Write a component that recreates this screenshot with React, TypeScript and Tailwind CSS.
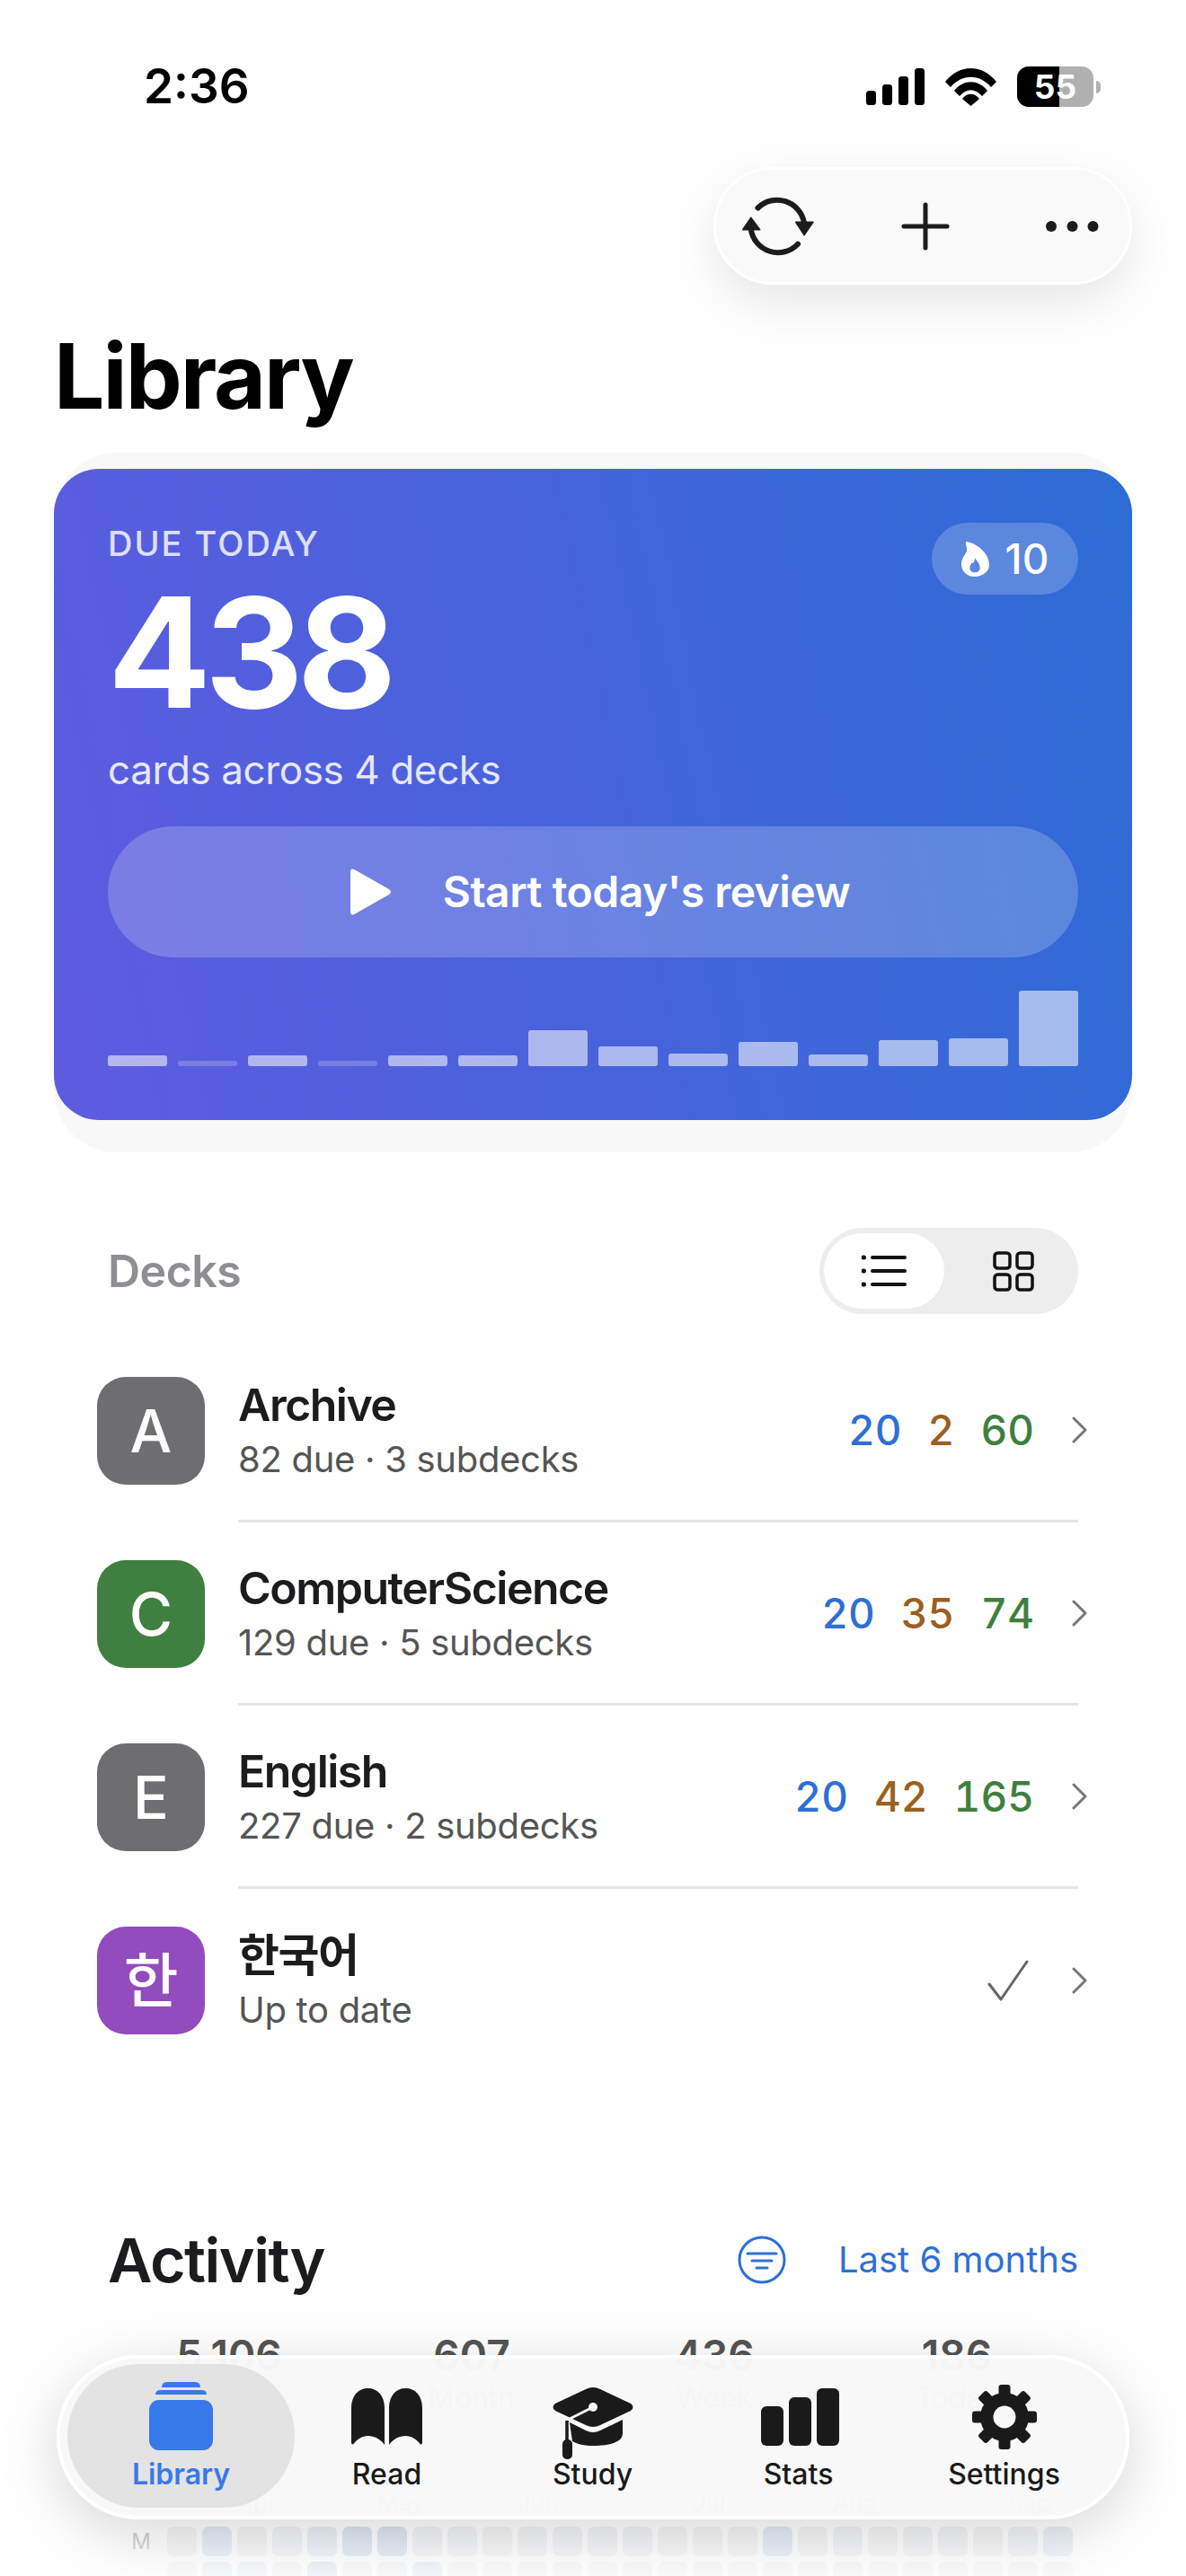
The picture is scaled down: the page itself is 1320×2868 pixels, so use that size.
const bars = [12, 6, 12, 6, 12, 12, 40, 22, 14, 27, 13, 29, 31, 84];

const decks = [
  { letter: "A", color: "bg-[#6e6e70]", name: "Archive", sub: "82 due · 3 subdecks", counts: ["20", "2", "60"] },
  { letter: "C", color: "bg-[#3f7f40]", name: "ComputerScience", sub: "129 due · 5 subdecks", counts: ["20", "35", "74"] },
  { letter: "E", color: "bg-[#6e6e70]", name: "English", sub: "227 due · 2 subdecks", counts: ["20", "42", "165"] },
  { letter: "한", color: "bg-[#924cbd]", name: "한국어", sub: "Up to date", counts: [] as string[] },
];

const stats = [
  { value: "5,106", label: "Year" },
  { value: "607", label: "Month" },
  { value: "436", label: "Week" },
  { value: "186", label: "Today" },
];

const months = [
  { name: "Apr", cls: "col-start-3" },
  { name: "May", cls: "col-start-7" },
  { name: "Jun", cls: "col-start-11" },
  { name: "Jul", cls: "col-start-16" },
  { name: "Aug", cls: "col-start-20" },
  { name: "Sep", cls: "col-start-25" },
];

const levels = ["bg-[#f3f3f3]", "bg-[#f0f1f4]", "bg-[#e8edf3]", "bg-[#dfe8f4]", "bg-[#d8e2ef]"];
const heatRows = [
  [0, 3, 0, 1, 2, 4, 4, 1, 1, 0, 1, 1, 1, 1, 0, 0, 0, 3, 0, 1, 0, 1, 1, 0, 1, 2],
  [0, 2, 2, 1, 4, 1, 1, 3, 1, 0, 1, 1, 0, 1, 0, 1, 0, 1, 1, 1, 0, 1, 1, 0, 1, 1],
];

function SignalIcon() {
  return (
    <svg width="65" height="41" viewBox="0 0 65 41" fill="#000">
      <rect x="0" y="25" width="11" height="16" rx="3.5" />
      <rect x="18" y="18" width="11" height="23" rx="3.5" />
      <rect x="36" y="9" width="11" height="32" rx="3.5" />
      <rect x="54" y="0" width="11" height="41" rx="3.5" />
    </svg>
  );
}

function WifiIcon() {
  return (
    <svg width="57" height="42" viewBox="0 0 57 42" fill="#000">
      <path d="M0 15 C16 -5 41 -5 57 15 L51 21 C38 6 19 6 6 21 Z" />
      <path d="M10 25 C20 12 37 12 47 25 L41 31 C33 22 24 22 16 31 Z" />
      <path d="M19 34 C24 27 33 27 38 34 L28.5 42 Z" />
    </svg>
  );
}

function Battery() {
  return (
    <div className="flex items-center">
      <div className="relative flex h-[45px] w-[85px] overflow-hidden rounded-[13px] bg-[#b0b0b0]">
        <div className="h-full w-[47px] bg-black" />
        <span className="absolute inset-0 flex items-center justify-center text-[37px] font-bold leading-none text-white">
          55
        </span>
      </div>
      <div className="ml-[3px] h-[14px] w-[5px] rounded-r-full bg-[#b0b0b0]" />
    </div>
  );
}

function SyncIcon() {
  return (
    <svg width="80" height="80" viewBox="0 0 80 80" fill="none" stroke="#1c1c1e" strokeWidth="6" strokeLinecap="round">
      <path d="M17.5 19.5 A30.5 30.5 0 0 1 69 36" />
      <path d="M59.7 35.3 H79 L69 49.7 Z" fill="#1c1c1e" strokeWidth="1.5" strokeLinejoin="round" />
      <path d="M62 59.7 A30.5 30.5 0 0 1 9.7 43" />
      <path d="M0.7 43.7 H19.7 L9.7 30.3 Z" fill="#1c1c1e" strokeWidth="1.5" strokeLinejoin="round" />
    </svg>
  );
}

function Flame() {
  return (
    <svg width="31" height="39" viewBox="0 0 93 117" fill="#fff">
      <path
        fillRule="evenodd"
        d="M15 0 C40 2 90 30 93 75 C95 100 70 117 45 117 C18 117 0 100 0 75 C0 55 12 45 18 32 C20 22 14 10 15 0 Z M46 55 C50 65 62 72 62 88 C62 98 55 103 45 103 C35 103 28 98 28 88 C28 80 32 78 35 70 C38 75 43 70 46 55 Z"
      />
    </svg>
  );
}

function ListIcon() {
  return (
    <svg width="50" height="36" viewBox="0 0 50 36" fill="none" stroke="#111" strokeWidth="4" strokeLinecap="round">
      <path d="M12 3 H48 M12 18 H48 M12 33 H48" />
      <path d="M2 3 H2.5 M2 18 H2.5 M2 33 H2.5" strokeWidth="5" />
    </svg>
  );
}

function GridIcon() {
  return (
    <svg width="46" height="45" viewBox="0 0 46 45" fill="none" stroke="#111" strokeWidth="3.5">
      <rect x="2" y="2" width="17" height="17" rx="3.5" />
      <rect x="27" y="2" width="17" height="17" rx="3.5" />
      <rect x="2" y="26" width="17" height="17" rx="3.5" />
      <rect x="27" y="26" width="17" height="17" rx="3.5" />
    </svg>
  );
}

function Chevron() {
  return (
    <svg width="18" height="30" viewBox="0 0 18 30" fill="none" stroke="#777" strokeWidth="3" strokeLinecap="round" strokeLinejoin="round">
      <path d="M3 2 L16 15 L3 28" />
    </svg>
  );
}

function FilterIcon() {
  return (
    <svg width="54" height="54" viewBox="0 0 54 54" fill="none" stroke="#2f6fd6" strokeWidth="3" strokeLinecap="round">
      <circle cx="27" cy="27" r="25" />
      <path d="M11 20 H43 M16 28 H38 M21 36 H33" />
    </svg>
  );
}

function LibraryIcon() {
  return (
    <svg className="mt-[2px]" width="71" height="76" viewBox="0 0 71 76" fill="#3779ea">
      <path d="M14 6 Q14 0 20 0 H51 Q57 0 57 6 H14 Z" />
      <path d="M7 14 Q7 9 13 9 H58 Q64 9 64 14 H7 Z" />
      <rect x="0" y="20" width="71" height="56" rx="11" />
    </svg>
  );
}

function ReadIcon() {
  return (
    <svg className="mt-[9px]" width="79" height="63" viewBox="0 0 79 63" fill="#1a1a1a">
      <path d="M0 22 C0 8 8 0 18.5 0 C29 0 37 8 37 22 V63 C33 57 26 53 18.5 53 C12 53 6 57 2.5 62 C1 63 0 62 0 60 Z" />
      <path d="M79 22 C79 8 71 0 60.5 0 C50 0 42 8 42 22 V63 C46 57 53 53 60.5 53 C67 53 73 57 76.5 62 C78 63 79 62 79 60 Z" />
    </svg>
  );
}

function StudyIcon() {
  return (
    <svg className="mt-[7px]" width="92" height="81" viewBox="0 0 92 81" fill="#1a1a1a">
      <path d="M38 3 Q46 -1 54 3 L88 19 Q93 23 88 27 L54 43 Q46 47 38 43 L4 27 Q-1 23 4 19 Z" />
      <path d="M20 40 L38 49 Q46 53 54 49 L79 37 V52 C79 62 65 66 46 66 C37 66 28 64 23 61 Z" />
      <path d="M46 23 L16 38" stroke="#f8f8f8" strokeWidth="3" fill="none" />
      <circle cx="46" cy="23" r="5" fill="#f8f8f8" />
      <path d="M17 38 V62" stroke="#1a1a1a" strokeWidth="3.5" fill="none" />
      <rect x="12" y="59" width="11" height="22" rx="5" />
    </svg>
  );
}

function StatsIcon() {
  return (
    <svg className="mt-[9px] ml-[4px]" width="87" height="64" viewBox="0 0 87 64" fill="#1a1a1a">
      <rect x="0" y="20" width="25" height="44" rx="6" />
      <rect x="31" y="10" width="25" height="54" rx="6" />
      <rect x="62" y="0" width="25" height="64" rx="6" />
    </svg>
  );
}

function GearIcon() {
  const angles = [0, 45, 90, 135, 180, 225, 270, 315];
  return (
    <svg className="mt-[5px]" width="72" height="72" viewBox="-36 -36 72 72" fill="#1a1a1a">
      <circle r="27" />
      {angles.map((a) => (
        <rect key={a} x="-6.5" y="-36" width="13" height="16" rx="3" transform={`rotate(${a})`} />
      ))}
      <circle r="12.5" fill="#f8f8f8" />
    </svg>
  );
}

const tabs = [
  { label: "Read", icon: <ReadIcon /> },
  { label: "Study", icon: <StudyIcon /> },
  { label: "Stats", icon: <StatsIcon /> },
  { label: "Settings", icon: <GearIcon /> },
];

export default function App() {
  return (
    <div className="relative h-[2868px] w-[1320px] overflow-hidden bg-white font-['Inter','Noto_Sans_CJK_KR',sans-serif]">
      {/* status bar */}
      <div className="flex h-[186px] items-start justify-between pl-[160px] pr-[95px] pt-[74px]">
        <span className="text-[53px] font-semibold leading-[45px] text-black">2:36</span>
        <div className="flex items-center gap-[23px]">
          <SignalIcon />
          <WifiIcon />
          <Battery />
        </div>
      </div>

      {/* toolbar */}
      <div className="ml-auto mr-[60px] flex h-[131px] w-[466px] items-center rounded-full border-[3px] border-white bg-[#f9f9f9] shadow-[0_20px_60px_rgba(0,0,0,0.1)]">
        <div className="ml-[29px]">
          <SyncIcon />
        </div>
        <svg className="ml-[97px]" width="54" height="54" viewBox="0 0 54 54" stroke="#1c1c1e" strokeWidth="5" strokeLinecap="round">
          <path d="M27 3 V51 M3 27 H51" />
        </svg>
        <svg className="ml-[106px]" width="60" height="14" viewBox="0 0 60 14" fill="#1c1c1e">
          <circle cx="7" cy="7" r="6" />
          <circle cx="30.5" cy="7" r="6" />
          <circle cx="53.5" cy="7" r="6" />
        </svg>
      </div>

      <h1 className="ml-[60px] mt-[42px] text-[100px] font-bold leading-[120px] tracking-[-2px] text-black">Library</h1>

      {/* due today card */}
      <div className="mx-[60px] mt-[25px] rounded-[70px] bg-[#f8f8f8] pb-[36px] pt-[18px]">
        <div className="relative h-[725px] rounded-[50px] bg-[linear-gradient(78deg,#5f5be0,#2d6cd6)] px-[60px] pt-[61px]">
          <div className="absolute right-[60px] top-[60px] flex h-[80px] w-[163px] items-center justify-center gap-[18px] rounded-full bg-white/20">
            <Flame />
            <span className="text-[46px] font-medium leading-none text-white">10</span>
          </div>
          <div className="text-[38px] font-medium leading-[44px] tracking-[2px] text-white/80">DUE TODAY</div>
          <div className="mt-[24px] text-[170px] font-bold leading-[150px] tracking-[-7px] text-white">438</div>
          <div className="mt-[28px] text-[44px] leading-[56px] tracking-[-0.4px] text-white/85">cards across 4 decks</div>
          <div className="mt-[35px] flex h-[146px] items-center justify-center gap-[57px] rounded-full bg-white/20 pl-[16px]">
            <svg width="46" height="52" viewBox="0 0 46 52" fill="#fff">
              <path d="M0 4 Q0 -2 6 2 L43 23 Q47 26 43 29 L6 50 Q0 54 0 48 Z" />
            </svg>
            <span className="text-[48px] font-semibold leading-none tracking-[-0.5px] text-white">Start today's review</span>
          </div>
          <div className="mt-[37px] flex h-[84px] items-end gap-[12px]">
            {bars.map((h, i) => (
              <div
                key={i}
                className={h < 8 ? "w-[66px] rounded-[3px] bg-white/20" : "w-[66px] rounded-[3px] bg-white/55"}
                style={{ height: h }}
              />
            ))}
          </div>
        </div>
      </div>

      {/* decks */}
      <div className="mt-[84px] flex h-[96px] items-center justify-between pl-[120px] pr-[120px]">
        <span className="text-[50px] font-semibold tracking-[-0.5px] text-[#8e8e93]">Decks</span>
        <div className="flex h-[96px] w-[288px] items-center rounded-full bg-[#ededed] pl-[5px]">
          <div className="flex h-[84px] w-[134px] items-center justify-center rounded-full bg-white">
            <ListIcon />
          </div>
          <div className="ml-[54px]">
            <GridIcon />
          </div>
        </div>
      </div>

      <div className="ml-[108px] mr-[120px] mt-[28px]">
        {decks.map((d, i) => (
          <div key={d.name} className="flex h-[204px] items-center">
            <div className={`flex h-[120px] w-[120px] shrink-0 items-center justify-center rounded-[32px] text-[66px] font-medium text-white ${d.color}`}>
              {d.letter}
            </div>
            <div className={i < decks.length - 1 ? "ml-[37px] flex h-full flex-1 items-center border-b-[3px] border-[#e5e5e5]" : "ml-[37px] flex h-full flex-1 items-center"}>
              <div className="flex flex-col gap-[6px]">
                <span className="text-[50px] font-semibold leading-[60px] tracking-[-1.5px] text-[#1c1c1e]">{d.name}</span>
                <span className="text-[40px] leading-[50px] tracking-[-0.3px] text-[#555]">{d.sub}</span>
              </div>
              <div className="-mr-[10px] ml-auto flex items-center">
                {d.counts.length > 0 ? (
                  <div className="flex gap-[29px] text-[46px] font-medium leading-none tabular-nums">
                    <span className="text-[#2f6fd6]">{d.counts[0]}</span>
                    <span className="text-[#9a6020]">{d.counts[1]}</span>
                    <span className="text-[#3f7f40]">{d.counts[2]}</span>
                  </div>
                ) : (
                  <svg className="mr-[6px]" width="46" height="46" viewBox="0 0 46 46" fill="none" stroke="#666" strokeWidth="3" strokeLinecap="round" strokeLinejoin="round">
                    <path d="M2 27 L15 44 L44 2" />
                  </svg>
                )}
                <div className="ml-[41px]">
                  <Chevron />
                </div>
              </div>
            </div>
          </div>
        ))}
      </div>

      {/* activity */}
      <div className="mt-[166px] flex h-[86px] items-center px-[120px]">
        <span className="text-[68px] font-semibold tracking-[-1.5px] text-[#1c1c1e]">Activity</span>
        <div className="ml-auto flex items-center gap-[58px]">
          <FilterIcon />
          <span className="text-[40px] leading-none text-[#2f6fd6]">Last 6 months</span>
        </div>
      </div>

      <div className="mt-[35px] grid grid-cols-4 px-[120px]">
        {stats.map((s) => (
          <div key={s.label} className="flex flex-col items-center">
            <span className="text-[46px] font-semibold leading-[56px] text-[#555]">{s.value}</span>
            <span className="text-[32px] leading-[40px] text-[#888]">{s.label}</span>
          </div>
        ))}
      </div>

      <div className="ml-[186px] mt-[82px] grid h-[30px] grid-cols-[repeat(26,33px)] gap-x-[6px] text-[26px] leading-[30px] text-[#888]">
        {months.map((m) => (
          <span key={m.name} className={m.cls}>
            {m.name}
          </span>
        ))}
      </div>

      <div className="ml-[120px] mt-[11px] flex flex-col gap-[6px]">
        {heatRows.map((row, r) => (
          <div key={r} className="flex items-center">
            <span className="w-[48px] text-right text-[24px] leading-none text-[#c4c4c4]">{r === 0 ? "M" : ""}</span>
            <div className="ml-[18px] flex gap-[6px]">
              {row.map((l, c) => (
                <div key={c} className={`h-[33px] w-[33px] rounded-[7px] ${levels[l]}`} />
              ))}
            </div>
          </div>
        ))}
      </div>

      {/* fade at the bottom edge */}
      <div className="pointer-events-none absolute bottom-0 left-0 h-[63px] w-full bg-[linear-gradient(to_bottom,rgba(255,255,255,0),rgba(255,255,255,0.7))]" />

      {/* tab bar */}
      <div className="absolute left-[63px] top-[2622px] flex h-[183px] w-[1194px] items-start rounded-[91px] border-[4px] border-white bg-[#f8f8f8]/[0.975] pl-[8px] pt-[6px] shadow-[0_16px_70px_rgba(0,0,0,0.16)]">
        <div className="-mr-[12px] flex h-[160px] w-[253px] shrink-0 flex-col items-center rounded-full bg-[#e3e3e3] pt-[18px]">
          <div className="flex h-[87px] items-start">
            <LibraryIcon />
          </div>
          <span className="text-[32px] font-semibold leading-[36px] text-[#3779ea]">Library</span>
        </div>
        {tabs.map((t) => (
          <div key={t.label} className="flex h-[160px] w-[229px] shrink-0 flex-col items-center pt-[18px]">
            <div className="flex h-[87px] items-start">{t.icon}</div>
            <span className="text-[32px] font-medium leading-[36px] text-[#1a1a1a]">{t.label}</span>
          </div>
        ))}
      </div>
    </div>
  );
}
